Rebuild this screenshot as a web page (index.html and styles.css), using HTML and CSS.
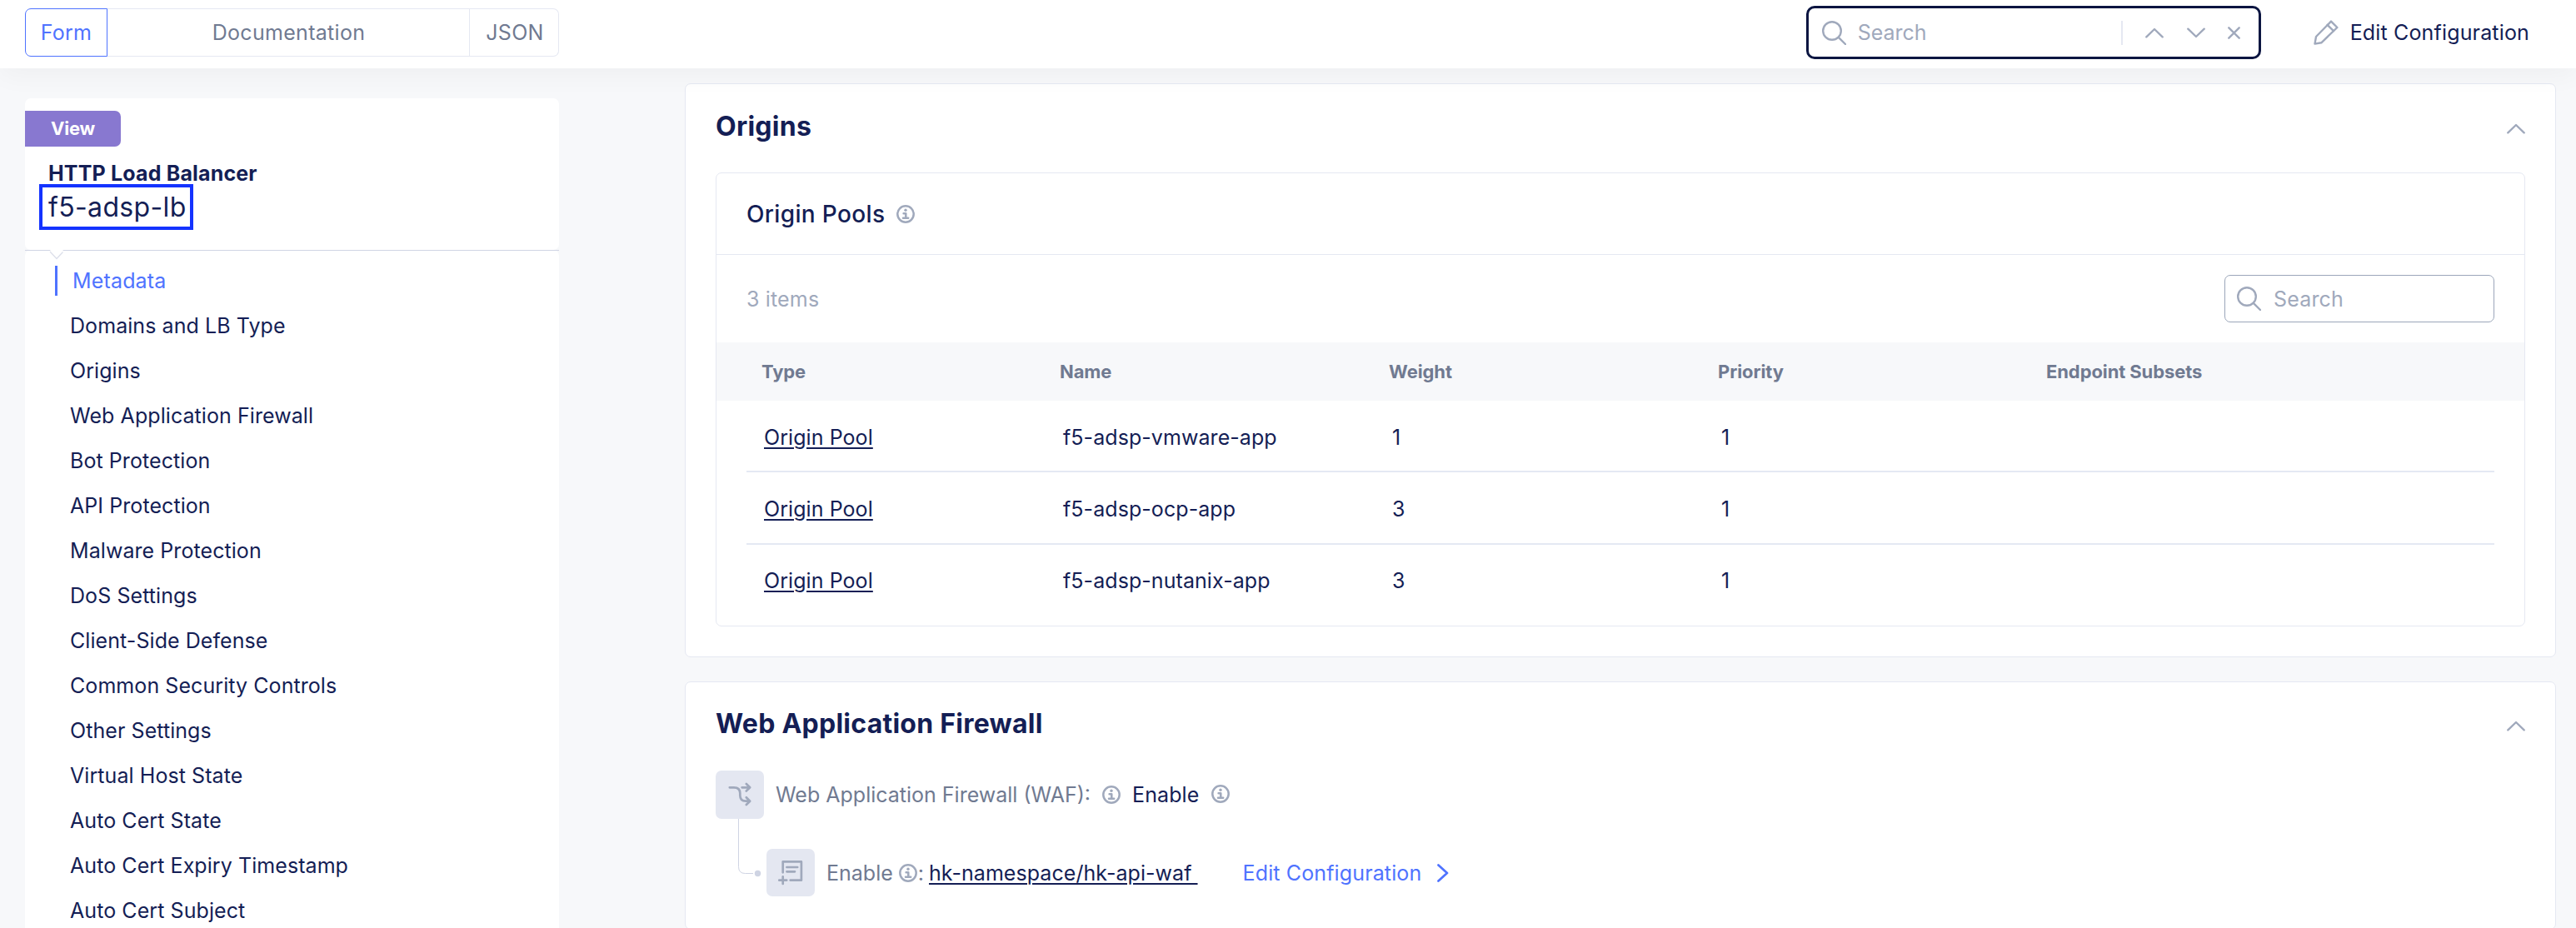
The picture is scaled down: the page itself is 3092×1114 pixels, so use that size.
FILE: index.html
```html
<!DOCTYPE html>
<html lang="en">
<head>
<meta charset="utf-8">
<title>HTTP Load Balancer</title>
<link rel="stylesheet" href="styles.css">
</head>
<body>
<svg class="defs" width="0" height="0" aria-hidden="true">
  <symbol id="i-search" viewBox="0 0 29 29"><circle cx="12" cy="12" r="10.8"/><path d="M19.8 19.8 28 28"/></symbol>
  <symbol id="i-info" viewBox="0 0 22 22"><circle cx="11" cy="11" r="9.7"/><circle class="fill" cx="11" cy="6.3" r="1.7"/><path d="M8.6 10.2h2.7v5.4M8 15.8h6.2"/></symbol>
  <symbol id="i-up" viewBox="0 0 22 13"><path d="M1.3 11.3 11 2l9.7 9.3"/></symbol>
  <symbol id="i-down" viewBox="0 0 22 13"><path d="M1.3 1.7 11 11l9.7-9.3"/></symbol>
</svg>

<header class="topbar">
  <div class="tabs">
    <a class="tab tab-form active">Form</a>
    <a class="tab tab-docs">Documentation</a>
    <a class="tab tab-json">JSON</a>
  </div>
  <div class="topbar-right">
    <div class="find">
      <svg class="icon search-icon"><use href="#i-search"/></svg>
      <span class="placeholder">Search</span>
      <span class="find-sep"></span>
      <svg class="icon chevron"><use href="#i-up"/></svg>
      <svg class="icon chevron"><use href="#i-down"/></svg>
      <svg class="icon close" viewBox="0 0 15 15"><path d="m1.3 1.3 12.4 12.4M13.7 1.3 1.3 13.7"/></svg>
    </div>
    <a class="edit">
      <svg class="icon pencil" viewBox="0 0 30 30"><path d="M21 1.6 28.4 9 9.3 27.3 1.5 28.6 3 20Z"/><path d="m16.6 5.8 7.4 7.4"/></svg>
      <span>Edit Configuration</span>
    </a>
  </div>
</header>

<div class="layout">
  <aside class="sidebar">
    <div class="summary">
      <span class="badge">View</span>
      <strong class="kind">HTTP Load Balancer</strong>
      <span class="name">f5-adsp-lb</span>
      <svg class="notch" viewBox="0 0 18 12"><path class="notch-fill" d="M1 0 9 9.5 17 0Z"/><path d="M1 2 9 10.5 16.5 2.5"/></svg>
    </div>
    <nav class="nav">
      <a class="current">Metadata</a>
      <a>Domains and LB Type</a>
      <a>Origins</a>
      <a>Web Application Firewall</a>
      <a>Bot Protection</a>
      <a>API Protection</a>
      <a>Malware Protection</a>
      <a>DoS Settings</a>
      <a>Client-Side Defense</a>
      <a>Common Security Controls</a>
      <a>Other Settings</a>
      <a>Virtual Host State</a>
      <a>Auto Cert State</a>
      <a>Auto Cert Expiry Timestamp</a>
      <a>Auto Cert Subject</a>
    </nav>
  </aside>

  <main class="main">
    <section class="card card-origins">
      <div class="card-head">
        <h2>Origins</h2>
        <svg class="icon chevron"><use href="#i-up"/></svg>
      </div>
      <div class="pools">
        <div class="pools-title">
          <h3>Origin Pools</h3>
          <svg class="icon info"><use href="#i-info"/></svg>
        </div>
        <div class="toolbar">
          <span class="placeholder">3 items</span>
          <div class="filter">
            <svg class="icon search-icon"><use href="#i-search"/></svg>
            <span class="placeholder">Search</span>
          </div>
        </div>
        <div class="thead">
          <span>Type</span><span>Name</span><span>Weight</span><span>Priority</span><span>Endpoint Subsets</span>
        </div>
        <div class="rows">
          <div class="row"><a class="link">Origin Pool</a><span>f5-adsp-vmware-app</span><span>1</span><span>1</span></div>
          <div class="row"><a class="link">Origin Pool</a><span>f5-adsp-ocp-app</span><span>3</span><span>1</span></div>
          <div class="row"><a class="link">Origin Pool</a><span>f5-adsp-nutanix-app</span><span>3</span><span>1</span></div>
        </div>
      </div>
    </section>

    <section class="card card-waf">
      <div class="card-head">
        <h2>Web Application Firewall</h2>
        <svg class="icon chevron"><use href="#i-up"/></svg>
      </div>
      <div class="tree">
        <div class="node">
          <svg class="icon tile" viewBox="0 0 58 58"><path d="M16.8 20.3h5.2c5 0 7.3 2 7.3 7v2.4c0 5 2.3 7 7 7h4.4M31.6 20.3h9.4M36.8 16l4.4 4.3-4.4 4.2M36.8 32.2l4.4 4.5-4.4 4.3"/></svg>
          <span class="label">Web Application Firewall (WAF):</span>
          <svg class="icon info"><use href="#i-info"/></svg>
          <span class="value">Enable</span>
          <svg class="icon info raised"><use href="#i-info"/></svg>
        </div>
        <div class="node child">
          <svg class="icon tile" viewBox="0 0 58 57"><path d="M19.7 28.3V15.4h22.2v22.3H28.7M24.4 22h12.8M24.4 27.3h9.6M19.7 33.4V42M15.3 37.7h8.9"/></svg>
          <span class="label">Enable</span>
          <svg class="icon info"><use href="#i-info"/></svg>
          <span class="label colon">:</span>
          <a class="link ref">hk-namespace/hk-api-waf&nbsp;</a>
          <a class="action">Edit Configuration</a>
          <svg class="icon go" viewBox="0 0 14 22"><path d="M1.5 1.5 12 11 1.5 20.5"/></svg>
        </div>
        <svg class="connector" viewBox="0 0 30 70"><path d="M1.5 0v57.5q0 8 8 8H19"/><circle cx="24.5" cy="65.5" r="3.7"/></svg>
      </div>
    </section>
  </main>
</div>
</body>
</html>
```
FILE: styles.css
```css
:root {
  --navy: #141e55;
  --gray: #707a91;
  --muted: #a0a9bc;
  --blue: #4f73ff;
  --line: #e5e8f2;
  --surface: #f7f8fa;
}
* { box-sizing: border-box; }
body {
  margin: 0;
  height: 1114px;
  overflow: hidden;
  background: var(--surface);
  color: var(--navy);
  font: 400 25px/30px Inter, "Liberation Sans", sans-serif;
  white-space: nowrap;
}
h2, h3 { margin: 0; }
.defs { display: none; }

.icon {
  flex: none;
  fill: none;
  stroke: var(--muted);
  stroke-width: 2.4;
  stroke-linecap: round;
  stroke-linejoin: round;
}
.search-icon { width: 29px; height: 29px; }
.info { width: 22px; height: 22px; stroke-width: 2.5; }
.info .fill, .fill { fill: var(--muted); stroke: none; }
.chevron { width: 22px; height: 13px; }
.close { width: 15px; height: 15px; }
.pencil { width: 30px; height: 30px; }
.placeholder { color: var(--muted); }

/* Top bar */
.topbar {
  position: relative;
  z-index: 1;
  height: 82px;
  padding: 7px 56px 11px 30px;
  display: flex;
  justify-content: space-between;
  align-items: center;
  background: #fff;
  box-shadow: 0 10px 30px rgba(20, 24, 30, 0.035);
}
.tabs { display: flex; width: 641px; height: 58px; color: var(--gray); letter-spacing: 0.3px; }
.tab {
  display: flex;
  align-items: center;
  justify-content: center;
  border: 1px solid var(--line);
  border-left: 0;
}
.tab-form { width: 99px; border: 1px solid var(--blue); border-radius: 7px 0 0 7px; color: var(--blue); }
.tab-docs { flex: 1; padding-left: 1px; }
.tab-json { width: 107px; padding-left: 2px; border-radius: 0 7px 7px 0; }
.topbar-right { display: flex; align-items: center; gap: 63px; }
.find {
  display: flex;
  align-items: center;
  width: 546px;
  height: 64px;
  padding: 0 22px 0 16px;
  border: 3px solid #0b1541;
  border-radius: 10px;
}
.find .placeholder { margin-left: 14px; flex: 1; }
.find-sep { width: 2px; height: 29px; margin-right: 27px; background: var(--line); }
.find .chevron { margin-right: 28px; }
.find .chevron + .chevron { margin-right: 27px; }
.edit { display: flex; align-items: center; gap: 14px; letter-spacing: 0.16px; }

/* Page body */
.layout { display: flex; gap: 151px; padding: 0 24px 0 30px; }
.sidebar { flex: none; width: 641px; padding-top: 36px; }
.summary {
  position: relative;
  display: flex;
  flex-direction: column;
  align-items: flex-start;
  height: 182px;
  padding-top: 15px;
  background: #fff;
  border-radius: 7px;
}
.summary::after {
  content: "";
  position: absolute;
  inset: 182px 0 auto;
  height: 1px;
  background: #d0d4e4;
}
.badge {
  width: 115px;
  height: 43px;
  padding-left: 31px;
  background: #8878d0;
  border-radius: 0 7px 7px 0;
  color: #fff;
  font-size: 22px;
  font-weight: 700;
  line-height: 43px;
  letter-spacing: -0.2px;
}
.kind { margin: 17px 0 0 28px; line-height: 30px; font-weight: 700; letter-spacing: 0.16px; }
.name {
  margin: -2px 0 0 17px;
  width: 185px;
  height: 55px;
  border: 4px solid #1433ff;
  padding-left: 7px;
  font-size: 32px;
  line-height: 47px;
  letter-spacing: 0.35px;
}
.notch {
  position: absolute;
  z-index: 1;
  left: 29px;
  top: 182px;
  width: 18px;
  height: 12px;
  fill: none;
  stroke: #dcdfea;
  stroke-width: 1.2;
}
.notch-fill { fill: #fff; stroke: none; }
.nav { padding-top: 10px; height: 820px; background: #fff; border-radius: 7px; letter-spacing: 0.07px; }
.nav a { display: flex; align-items: center; height: 54px; padding-left: 54px; }
.nav .current { padding-left: 36px; color: var(--blue); letter-spacing: 0.16px; }
.current::before { content: ""; width: 3px; height: 36px; margin-right: 18px; background: var(--blue); }

.main { flex: 1; display: flex; flex-direction: column; gap: 29px; padding-top: 18px; }
.card {
  padding: 31px 36px 0;
  background: #fff;
  border: 1px solid var(--line);
  border-radius: 7px;
}
.card-origins { height: 689px; }
.card-waf { height: 298px; padding-top: 30px; }
.card-head { display: flex; justify-content: space-between; align-items: center; height: 40px; }
.card-head .chevron { margin-top: 5px; }
h2 { font-size: 32px; line-height: 40px; letter-spacing: 0.25px; }

/* Origin pools */
.pools { margin-top: 35px; height: 545px; border: 1px solid var(--line); border-radius: 7px; }
.pools-title { display: flex; align-items: center; gap: 14px; height: 98px; padding-left: 36px; border-bottom: 1px solid var(--line); }
h3 { font-size: 28px; font-weight: 500; letter-spacing: 0.35px; }
.toolbar { display: flex; align-items: center; justify-content: space-between; height: 105px; padding: 0 36px; letter-spacing: 0.16px; }
.filter {
  display: flex;
  align-items: center;
  gap: 15px;
  width: 324px;
  height: 57px;
  padding-left: 14px;
  border: 1px solid #9ba6ba;
  border-radius: 7px;
}
.thead {
  display: grid;
  grid-template-columns: 358px 395px 395px 394px auto;
  height: 70px;
  padding-left: 54px;
  background: var(--surface);
  color: var(--gray);
  font-size: 22px;
  font-weight: 700;
  line-height: 70px;
  letter-spacing: -0.1px;
}
.rows { padding: 0 36px; letter-spacing: 0.07px; }
.row {
  display: grid;
  grid-template-columns: 359px 395px 395px auto;
  height: 86px;
  padding: 29px 0 0 21px;
  border-bottom: 2px solid #e4e9f3;
}
.row:nth-child(2) { height: 87px; }
.row:last-child { border: 0; padding-top: 28px; }
.link { text-decoration: underline; text-decoration-thickness: 2px; text-underline-offset: 3px; justify-self: start; }

/* Firewall tree */
.tree { position: relative; margin-top: 36px; }
.node { display: flex; align-items: center; height: 58px; }
.tile { width: 58px; height: 58px; margin-right: 14px; background: #e4e7f1; border-radius: 7px; stroke-width: 2.7; }
.label { color: var(--gray); }
.node .info { margin-left: 14px; }
.node .value { margin-left: 14px; letter-spacing: 0.1px; }
.node .raised { margin: -2px 0 0 15px; }
.child { margin: 36px 0 0 61px; height: 57px; }
.child .tile { height: 57px; margin-right: 14px; }
.child .info { margin-left: 7px; }
.colon { margin-left: 1px; }
.ref { margin-left: 6px; letter-spacing: 0.05px; }
.action { margin-left: 54px; color: var(--blue); letter-spacing: 0.13px; }
.go { width: 14px; height: 22px; margin-left: 19px; stroke: var(--blue); stroke-width: 2.7; }
.connector { position: absolute; left: 26px; top: 58px; width: 30px; height: 70px; fill: none; stroke: #cfd4e3; }
.connector circle { fill: #cfd4e3; stroke: none; }
```
